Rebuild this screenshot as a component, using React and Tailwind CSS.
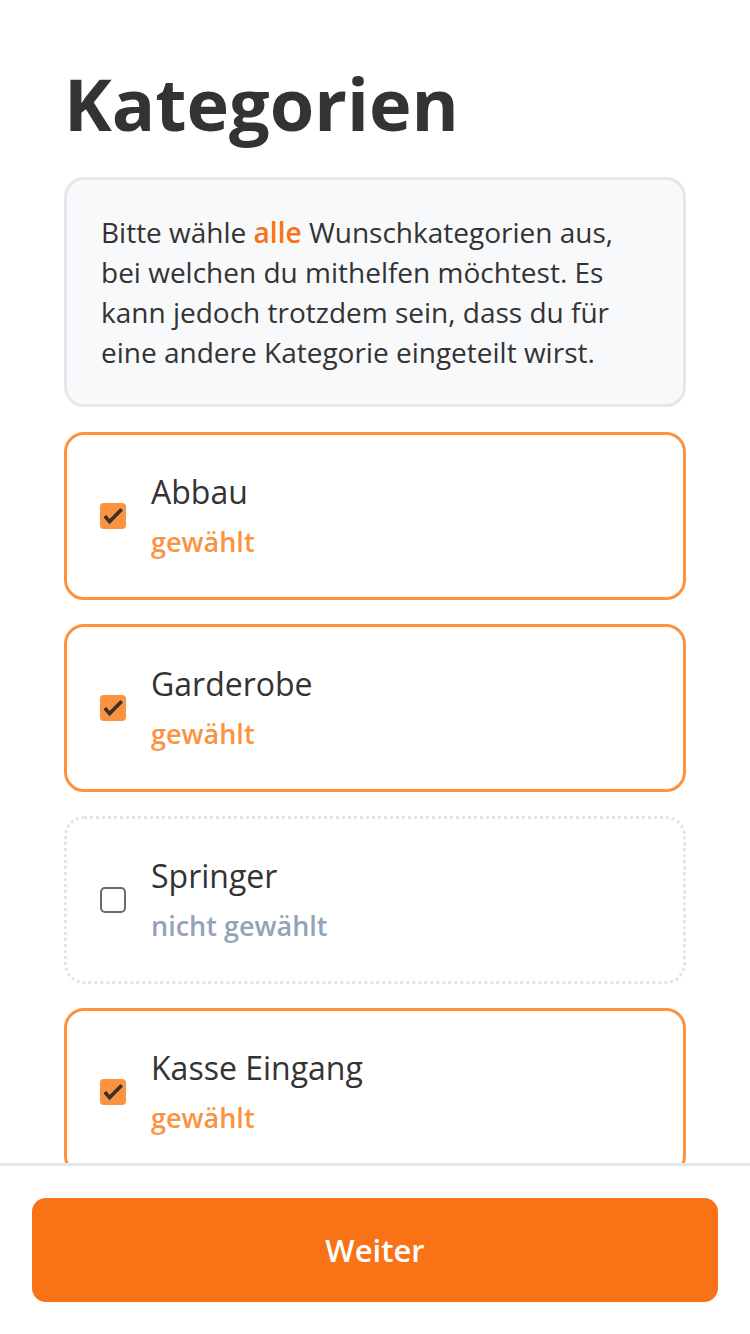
import React from "react";

const items = [
  { name: "Abbau", checked: true },
  { name: "Garderobe", checked: true },
  { name: "Springer", checked: false },
  { name: "Kasse Eingang", checked: true },
];

function Checkbox({ checked }) {
  if (checked) {
    return (
      <div className="relative w-[26px] h-[26px] shrink-0 rounded-[4px] bg-[#fd923f]">
        <svg className="absolute inset-0" width="26" height="26" viewBox="0 0 26 26" fill="none">
          <path d="M6 14.5 L9.6 18.6 L20.5 7.5" stroke="#333333" strokeWidth="3.6" strokeLinecap="square" strokeLinejoin="miter" />
        </svg>
      </div>
    );
  }
  return <div className="w-[26px] h-[26px] shrink-0 rounded-[5px] border-2 border-[#6b6b6b] bg-white" />;
}

function Card({ name, checked }) {
  return (
    <div
      className={
        checked
          ? "h-[168px] shrink-0 rounded-[20px] border-[3px] border-[#fd923f] flex items-center pl-[33px] gap-[25px]"
          : "h-[168px] shrink-0 rounded-[20px] border-[3px] border-dotted border-[#e2e4e8] flex items-center pl-[33px] gap-[25px]"
      }
    >
      <Checkbox checked={checked} />
      <div className="flex flex-col gap-[8px]">
        <div className="text-[32px] leading-[44px] text-[#333333]">{name}</div>
        <div
          className={
            checked
              ? "text-[27px] leading-[40px] font-semibold text-[#fd923f]"
              : "text-[27px] leading-[40px] font-semibold text-[#94a3b8]"
          }
        >
          {checked ? "gewählt" : "nicht gewählt"}
        </div>
      </div>
    </div>
  );
}

export default function App() {
  return (
    <div
      className="w-[750px] h-[1334px] flex flex-col bg-white overflow-hidden"
      style={{ fontFamily: '"Open Sans", "Noto Sans", sans-serif' }}
    >
      <main className="flex-1 overflow-hidden px-16 pt-[67px] flex flex-col">
        <h1 className="text-[72px] leading-none font-bold text-[#333333] mb-[38px]">Kategorien</h1>
        <div className="rounded-[20px] border-[3px] border-[#e5e7eb] bg-[#f8f9fb] pl-[34px] pr-10 py-8 text-[28px] leading-[40px] text-[#333333]">
          Bitte wähle <span className="font-semibold text-[#f97316]">alle</span> Wunschkategorien aus, bei welchen du mithelfen möchtest. Es kann jedoch trotzdem sein, dass du für eine andere Kategorie eingeteilt wirst.
        </div>
        <div className="flex flex-col gap-6 mt-[25px]">
          {items.map((it) => (
            <Card key={it.name} name={it.name} checked={it.checked} />
          ))}
        </div>
      </main>
      <footer className="shrink-0 border-t-[3px] border-[#e5e7eb] px-8 pt-8 pb-8 bg-white">
        <button className="w-full h-[104px] rounded-[14px] bg-[#f97316] text-white text-[31px] font-semibold flex items-center justify-center">
          Weiter
        </button>
      </footer>
    </div>
  );
}
